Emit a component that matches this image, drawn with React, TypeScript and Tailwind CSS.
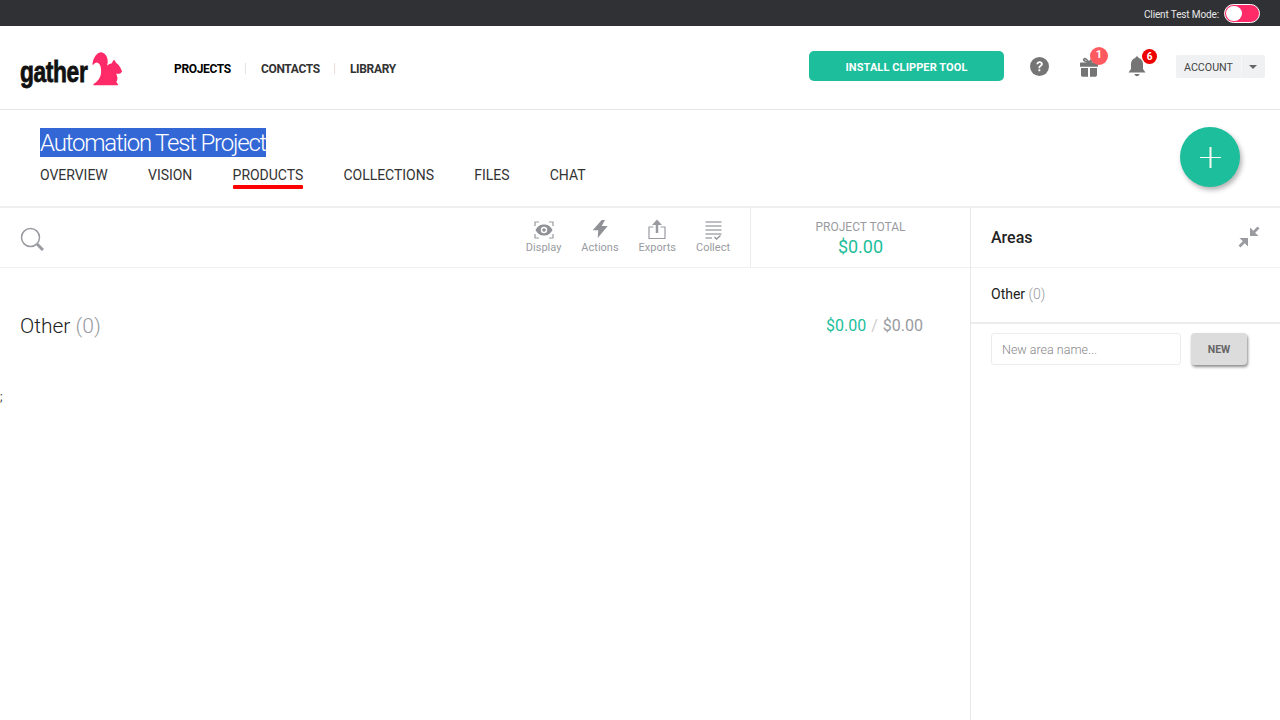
import React from "react";

const Squirrel = () => (
  <svg width="30" height="34" viewBox="24 14 90 102" className="ml-[2px] mt-[3px] shrink-0">
    <path fill="#ff2a68" stroke="#ff2a68" strokeWidth="4" strokeLinejoin="round" d="M27 50 C29 30 42 16 52 17 C64 19 70 32 69 46 C68 56 62 62 62 68 C66 60 74 52 84 50 L90 40 L95 48 C103 52 108 62 112 72 C110 78 104 78 100 77 L92 76 C98 84 100 96 95 104 L100 112 L30 112 C42 104 52 92 53 78 C54 66 52 52 45 46 C39 42 32 44 27 50 Z" />
  </svg>
);

const Nav = ({ children, active }: { children: React.ReactNode; active?: boolean }) => (
  <span className={`text-[12px] font-bold tracking-[-0.33px] ${active ? "text-black" : "text-[#333]"}`}>{children}</span>
);

const Tab = ({ children, active }: { children: React.ReactNode; active?: boolean }) => (
  <span className="relative text-[14px] leading-[20px] tracking-[-0.03px] text-[#333]">
    {children}
    {active && <span className="absolute left-0 right-0 top-[20px] h-[4px] rounded-[1px] bg-[#ff0000]" />}
  </span>
);

const Tool = ({ icon, label }: { icon: React.ReactNode; label: string }) => (
  <div className="flex flex-col items-center">
    <div className="flex h-[20px] items-center justify-center">{icon}</div>
    <span className="mt-[1px] text-[11px] leading-[14px] text-[#999ba1]">{label}</span>
  </div>
);

export default function App() {
  return (
    <div className="flex h-[720px] w-[1280px] flex-col overflow-hidden bg-white font-['Roboto',sans-serif] text-[#333]">
      <div className="flex h-[26px] shrink-0 items-center justify-end bg-[#303135] pr-[20px]">
        <span className="mr-[5px] mt-[3px] text-[10px] tracking-[-0.13px] text-[#e8e8e8]">Client Test Mode:</span>
        <span className="flex h-[19px] w-[36px] items-center rounded-full border border-white bg-[#ff2a68] pl-[1px]">
          <span className="h-[15px] w-[16px] rounded-full bg-white" />
        </span>
      </div>

      <header className="flex h-[84px] shrink-0 items-center border-b border-[#e6e6e6]">
        <div className="ml-[20px] flex w-[154px] items-center">
          <span className="mt-[9px] block w-[70px] shrink-0 origin-left scale-x-[0.76] whitespace-nowrap font-['Liberation_Sans',sans-serif] text-[30px] font-bold leading-none tracking-[-0.5px] text-[#111] [-webkit-text-stroke:0.8px_#111]">gather</span>
          <Squirrel />
        </div>
        <nav className="mt-[2px] flex items-center">
          <Nav active>PROJECTS</Nav>
          <span className="mx-[14.5px] h-[11px] w-px bg-[#e4e4e4]" />
          <Nav>CONTACTS</Nav>
          <span className="mx-[14.5px] h-[11px] w-px bg-[#f0dcdc]" />
          <Nav>LIBRARY</Nav>
        </nav>
        <button className="ml-auto mt-[-3px] flex h-[30px] w-[195px] items-center justify-center rounded-[5px] bg-[#1cbe9b] pt-[4px] text-[11px] font-bold tracking-[0.1px] text-white">
          INSTALL CLIPPER TOOL
        </button>
        <svg className="ml-[26px] mt-[-2px]" width="19" height="19" viewBox="0 0 19 19">
          <circle cx="9.5" cy="9.5" r="9.5" fill="#757575" />
          <path d="M6.4 7.3 C6.5 5.4 7.9 4.3 9.7 4.3 C11.5 4.3 12.8 5.4 12.8 7 C12.8 8.3 12 8.9 11.1 9.5 C10.4 10 10.2 10.4 10.2 11.2 L8.5 11.2 C8.5 10 8.8 9.3 9.7 8.6 C10.4 8.1 10.9 7.8 10.9 7.1 C10.9 6.4 10.4 5.9 9.6 5.9 C8.8 5.9 8.3 6.5 8.2 7.3 Z" fill="#fff" />
          <rect x="8.4" y="12.3" width="1.9" height="1.9" fill="#fff" />
        </svg>
        <div className="relative ml-[30px] mt-[-2px] h-[20px] w-[20px]">
          <svg width="20" height="20" viewBox="0 0 20 20" className="absolute left-0 top-0">
            <path d="M1 6.5 C1 5.9 1.4 5.5 2 5.5 H18 C18.6 5.5 19 5.9 19 6.5 V9.8 H1 Z M2 10.9 H9 V19.8 H4 C2.8 19.8 2 19 2 18 Z M11 10.9 H18 V18 C18 19 17.2 19.8 16 19.8 H11 Z" fill="#757575" />
            <path d="M10 5.5 C8 2 6 1 5 2 C4 3 5.5 5 10 5.5 C14.5 5 16 3 15 2 C14 1 12 2 10 5.5 Z" fill="none" stroke="#757575" strokeWidth="1.6" />
          </svg>
          <span className="absolute left-[11px] top-[-10px] flex h-[18px] w-[18px] items-center justify-center rounded-full bg-[#ff5a5f] text-[11px] font-bold text-white">1</span>
        </div>
        <div className="relative ml-[28px] mt-[-3px] h-[20px] w-[20px]">
          <svg width="20" height="21" viewBox="0 0 20 21" className="absolute left-0 top-0">
            <path d="M10 0.5 C11 0.5 11.6 1.2 11.6 2.1 C14.5 2.9 16 5.2 16 8.2 V13 L18.5 16.5 H1.5 L4 13 V8.2 C4 5.2 5.5 2.9 8.4 2.1 C8.4 1.2 9 0.5 10 0.5 Z M7.5 18 H12.5 C12.3 19.4 11.3 20.2 10 20.2 C8.7 20.2 7.7 19.4 7.5 18 Z" fill="#757575" />
          </svg>
          <span className="absolute left-[15px] top-[-7px] flex h-[15px] w-[15px] items-center justify-center rounded-full bg-[#ee0000] text-[10px] font-bold text-white">6</span>
        </div>
        <div className="ml-[29px] mr-[15px] mt-[-2px] flex h-[23px] w-[89px] items-center rounded-[2px] bg-[#f0f1f3] text-[10.7px] text-[#444]">
          <span className="flex h-full w-[66px] items-center border-r border-[#f6f6f7] pl-[8px] pt-[4px]">ACCOUNT</span>
          <span className="ml-[7px] h-0 w-0 border-x-[4px] border-t-[4px] border-x-transparent border-t-[#666]" />
        </div>
      </header>

      <section className="flex h-[98px] shrink-0 items-start justify-between border-b-2 border-[#f0f0f0] pl-[40px] pr-[40px]">
        <div>
          <h1 className="mt-[18px] h-[29px] w-fit bg-[#3367d6] text-[24px] font-light leading-[31px] tracking-[-1.2px] text-white">Automation Test Project</h1>
          <div className="mt-[8px] flex gap-[40.3px]">
            <Tab>OVERVIEW</Tab>
            <Tab>VISION</Tab>
            <Tab active>PRODUCTS</Tab>
            <Tab>COLLECTIONS</Tab>
            <Tab>FILES</Tab>
            <Tab>CHAT</Tab>
          </div>
        </div>
        <button className="mt-[17px] flex h-[60px] w-[60px] items-center justify-center rounded-full bg-[#1cbe9b] shadow-[2px_3px_5px_rgba(0,0,0,0.3)]">
          <svg width="21" height="21" viewBox="0 0 21 21">
            <rect x="9.5" y="0" width="2" height="21" fill="#f4f8ee" />
            <rect x="0" y="10" width="21" height="1" fill="#fff" />
          </svg>
        </button>
      </section>

      <div className="flex min-h-0 flex-1">
        <main className="flex w-[970px] flex-col">
          <div className="flex h-[60px] shrink-0 items-center border-b border-[#f0f0f0]">
            <svg className="ml-[20px] mt-[2px]" width="24" height="24" viewBox="0 0 24 24" fill="none">
              <circle cx="10.5" cy="10.5" r="9" stroke="#999ba1" strokeWidth="1.5" />
              <path d="M17 17 L23 23" stroke="#999ba1" strokeWidth="3" />
            </svg>
            <div className="ml-auto flex items-center gap-[20px] pr-[20px]">
              <Tool label="Display" icon={
                <svg width="20" height="18" viewBox="0 0 20 18" fill="none">
                  <path d="M1 5 V1 H5 M15 1 H19 V5 M19 13 V17 H15 M5 17 H1 V13" stroke="#999ba1" strokeWidth="1.2" />
                  <path d="M1.5 9 C4 4.5 7 3.5 10 3.5 C13 3.5 16 4.5 18.5 9 C16 13.5 13 14.5 10 14.5 C7 14.5 4 13.5 1.5 9 Z" fill="#8f9196" />
                  <circle cx="10" cy="9" r="3.2" fill="#fff" />
                  <circle cx="10" cy="9" r="1.8" fill="#8f9196" />
                </svg>
              } />
              <Tool label="Actions" icon={
                <svg className="mt-[-2px]" width="16" height="18" viewBox="0 0 16 18">
                  <path d="M9.7 0 L0.7 10.3 H6.3 L5.7 18 L15.7 6 H9.7 L13 0 Z" fill="#8f9196" />
                </svg>
              } />
              <Tool label="Exports" icon={
                <svg className="mt-[-2px]" width="18" height="20" viewBox="0 0 18 20" fill="none">
                  <path d="M5.5 8 H1 V19.5 H17 V8 H12.5" stroke="#999ba1" strokeWidth="1.2" />
                  <path d="M9 14 V2 " stroke="#999ba1" strokeWidth="2.5" />
                  <path d="M4 6 L9 0.5 L14 6 Z" fill="#999ba1" />
                </svg>
              } />
              <Tool label="Collect" icon={
                <svg width="17" height="19" viewBox="0 0 17 19" fill="none" stroke="#a9abb0" strokeWidth="1.6">
                  <path d="M0.5 1 H16.5 M0.5 5 H16.5 M0.5 9 H16.5 M0.5 13 H16.5 M0.5 17 H7" />
                  <path d="M9.5 16 L11.5 18 L15.5 14.5" strokeWidth="1.3" stroke="#8f9196" />
                </svg>
              } />
            </div>
            <div className="flex h-full w-[220px] flex-col items-center border-l border-[#ececec] pt-[12px]">
              <span className="text-[12px] leading-[15px] text-[#999ba1]">PROJECT TOTAL</span>
              <span className="mt-[1px] text-[18px] leading-[22px] text-[#1cbe9b]">$0.00</span>
            </div>
          </div>
          <div className="flex items-center justify-between pl-[20px] pr-[47px] pt-[44px]">
            <span className="text-[21px] font-light leading-[28px] text-[#222]">
              Other <span className="text-[#999ba1]">(0)</span>
            </span>
            <span className="text-[16px] leading-[20px]">
              <span className="text-[#1cbe9b]">$0.00</span>
              <span className="mx-[1px] text-[#ccc]"> / </span>
              <span className="text-[#999ba1]">$0.00</span>
            </span>
          </div>
          <div className="mt-[50px] text-[12px] leading-[14px] text-[#333]">;</div>
        </main>

        <aside className="flex w-[310px] flex-col border-l border-[#e8e8e8]">
          <div className="flex h-[60px] shrink-0 items-center justify-between border-b border-[#f2f2f2] pl-[20px] pr-[20px]">
            <span className="text-[16px] font-medium text-[#222]">Areas</span>
            <svg className="mt-[-2px]" width="22" height="22" viewBox="0 0 22 22" fill="#999ba1">
              <path d="M12 10 V1.5 L15.3 4.8 L19.5 0.5 L21.5 2.5 L17.2 6.8 L20.5 10 Z" />
              <path d="M10 12 V20.5 L6.7 17.2 L2.5 21.5 L0.5 19.5 L4.8 15.2 L1.5 12 Z" />
            </svg>
          </div>
          <div className="flex h-[56px] shrink-0 items-center border-b-2 border-[#ececec] pb-[2px] pl-[20px] text-[14px] text-[#222]">
            <span>Other <span className="font-light text-[#999ba1]">(0)</span></span>
          </div>
          <div className="flex items-start pl-[20px] pt-[9px]">
            <input
              placeholder="New area name..."
              className="h-[32px] w-[190px] rounded-[3px] border border-[#ececec] px-[10px] text-[12.5px] font-light outline-none placeholder:text-[#888]"
            />
            <button className="ml-[10px] h-[32px] w-[56px] rounded-[4px] bg-[#dcdcdc] pt-[2px] text-[10.5px] font-bold text-[#666] shadow-[1px_2px_3px_rgba(0,0,0,0.45)]">NEW</button>
          </div>
        </aside>
      </div>
    </div>
  );
}
